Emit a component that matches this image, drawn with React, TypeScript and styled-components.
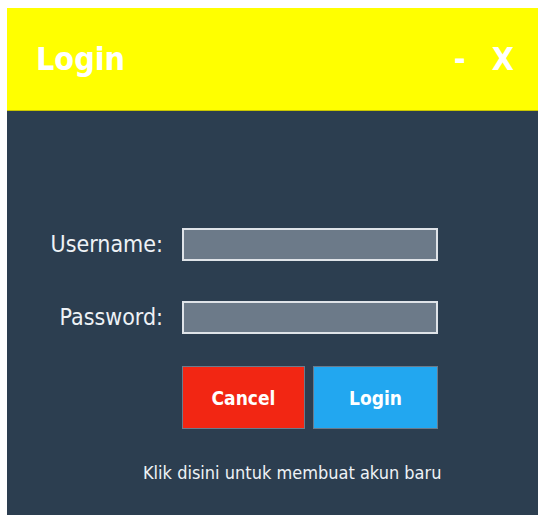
import React from 'react';
import styled, { createGlobalStyle } from 'styled-components';

const GlobalStyle = createGlobalStyle`
  html, body {
    margin: 0;
    height: 100%;
    background: #ffffff;
  }
  body {
    padding: 8px 1px 0 7px;
    box-sizing: border-box;
    font-family: "DejaVu Sans Condensed", "DejaVu Sans", sans-serif;
    font-stretch: condensed;
  }
`;

// Window frame
const Window = styled.div`
  height: calc(100vh - 8px);
  display: flex;
  flex-direction: column;
  background: #2c3e50;
`;

// Yellow title bar
const TitleBar = styled.div`
  height: 103px;
  flex-shrink: 0;
  display: flex;
  align-items: center;
  justify-content: space-between;
  padding: 0 24px 0 29px;
  background: #ffff00;
  border-bottom: 1px solid #c9c600;
  box-sizing: border-box;
  color: #ffffff;
  font-weight: bold;
  font-size: 32px;
`;

const Title = styled.span`
  line-height: 1;
`;

const Controls = styled.div`
  display: flex;
  align-items: center;
  gap: 26px;
`;

const Control = styled.span`
  line-height: 1;
  cursor: pointer;
`;

const Body = styled.div`
  flex: 1;
  padding-top: 117px;
`;

const Form = styled.div`
  display: grid;
  grid-template-columns: 156px 256px;
  column-gap: 19px;
  row-gap: 40px;
  align-items: center;
`;

const Label = styled.label`
  justify-self: end;
  color: #eef2f6;
  font-size: 23px;
  line-height: 1;
`;

const Input = styled.input`
  width: 256px;
  height: 33px;
  box-sizing: border-box;
  margin: 0;
  background: #6c7a89;
  border: 2px solid #dfe3e8;
  color: #ffffff;
  font: inherit;
  font-size: 16px;
  padding: 0 6px;
  outline: none;
`;

const Actions = styled.div`
  grid-column: 2;
  display: flex;
  gap: 8px;
  margin-top: -8px;
`;

const Button = styled.button<{ $tone: string; $width: number }>`
  width: ${p => p.$width}px;
  height: 63px;
  margin: 0;
  border: 1px solid #6b7b8c;
  background: ${p => p.$tone};
  color: #ffffff;
  font-family: inherit;
  font-stretch: condensed;
  font-weight: bold;
  font-size: 19px;
  cursor: pointer;
`;

const SignupLink = styled.div`
  margin-top: 33px;
  padding-left: 136px;
  color: #eef2f6;
  font-size: 18px;
  line-height: 22px;
  cursor: pointer;
`;

export default function App() {
  return (
    <>
      <GlobalStyle />
      <Window>
        <TitleBar>
          <Title>Login</Title>
          <Controls>
            <Control>-</Control>
            <Control>X</Control>
          </Controls>
        </TitleBar>
        <Body>
          <Form>
            <Label htmlFor="username">Username:</Label>
            <Input id="username" type="text" />
            <Label htmlFor="password">Password:</Label>
            <Input id="password" type="password" />
            <Actions>
              <Button $tone="#f22613" $width={123}>Cancel</Button>
              <Button $tone="#22a7f0" $width={125}>Login</Button>
            </Actions>
          </Form>
          <SignupLink>Klik disini untuk membuat akun baru</SignupLink>
        </Body>
      </Window>
    </>
  );
}
